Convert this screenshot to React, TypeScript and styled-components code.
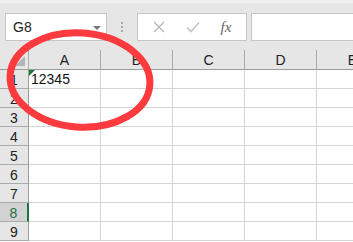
import styled, { createGlobalStyle } from "styled-components"

const GlobalStyle = createGlobalStyle`
  html, body {
    margin: 0;
    padding: 0;
    background: #ffffff;
    overflow: hidden;
  }
  * {
    box-sizing: border-box;
  }
`

const Sheet = styled.div`
  position: relative;
  width: 353px;
  height: 242px;
  overflow: hidden;
  font-family: "Liberation Sans", Arial, sans-serif;
`

const FormulaBar = styled.div`
  height: 50px;
  background: #e6e6e6;
  border-top: 3px solid #f0f0f0;
  display: flex;
  align-items: flex-start;
  padding: 10px 0 0 5px;
`

const NameBox = styled.div`
  width: 102px;
  height: 28px;
  background: #ffffff;
  border: 1px solid #c6c6c6;
  display: flex;
  align-items: center;
  justify-content: space-between;
  padding: 0 5px 0 7px;
  font-size: 14px;
  color: #222;
`

const DropArrow = styled.span`
  width: 0;
  height: 0;
  border-left: 4px solid transparent;
  border-right: 4px solid transparent;
  border-top: 4px solid #777;
  margin-top: 1px;
`

const Grip = styled.div`
  width: 30px;
  height: 28px;
  display: flex;
  flex-direction: column;
  align-items: center;
  justify-content: center;
  gap: 2px;
`

const GripDot = styled.span`
  width: 2px;
  height: 2px;
  background: #a8a8a8;
`

const ButtonBox = styled.div`
  width: 110px;
  height: 28px;
  background: #ffffff;
  border: 1px solid #c6c6c6;
  display: flex;
  align-items: center;
  justify-content: space-around;
  padding: 0 4px;
`

const FxLabel = styled.span`
  font-family: "Liberation Serif", "Times New Roman", serif;
  font-style: italic;
  font-size: 15px;
  color: #666;
`

const FormulaInput = styled.div`
  flex: 1;
  height: 28px;
  margin-left: 4px;
  background: #ffffff;
  border: 1px solid #c6c6c6;
  border-right: none;
`

const Grid = styled.div`
  display: grid;
  grid-template-columns: 29px repeat(5, 72px);
  grid-template-rows: 20px;
  grid-auto-rows: 19px;
`

const Corner = styled.div`
  background: #e6e6e6;
  border-right: 1px solid #ababab;
  border-bottom: 1px solid #9b9b9b;
  position: relative;
`

const CornerTriangle = styled.span`
  position: absolute;
  right: 3px;
  bottom: 3px;
  width: 0;
  height: 0;
  border-left: 10px solid transparent;
  border-bottom: 10px solid #b4b4b4;
`

const ColHeader = styled.div`
  background: #e6e6e6;
  border-right: 1px solid #ababab;
  border-bottom: 1px solid #9b9b9b;
  display: flex;
  align-items: flex-end;
  justify-content: center;
  font-size: 14px;
  line-height: 16px;
  color: #222;
  padding-bottom: 1px;
`

const RowHeader = styled.div<{ $active?: boolean }>`
  background: ${(p) => (p.$active ? "#d2d2d2" : "#e6e6e6")};
  border-bottom: 1px solid #ababab;
  border-right: ${(p) => (p.$active ? "2px solid #217346" : "1px solid #9b9b9b")};
  display: flex;
  align-items: center;
  justify-content: center;
  font-size: 14px;
  color: ${(p) => (p.$active ? "#217346" : "#222")};
  padding-top: 1px;
`

const Cell = styled.div`
  position: relative;
  background: #ffffff;
  border-right: 1px solid #d4d4d4;
  border-bottom: 1px solid #d4d4d4;
  font-size: 14px;
  color: #111;
  padding: 1px 0 0 2px;
  line-height: 17px;
  white-space: nowrap;
`

const ErrorMark = styled.span`
  position: absolute;
  left: 0;
  top: 0;
  width: 0;
  height: 0;
  border-top: 6px solid #1f7a3a;
  border-right: 6px solid transparent;
`

const Highlight = styled.svg`
  position: absolute;
  left: 0;
  top: 0;
  pointer-events: none;
`

const columns = ["A", "B", "C", "D", "E"]
const rows = [1, 2, 3, 4, 5, 6, 7, 8, 9]

export default function App() {
  return (
    <Sheet>
      <GlobalStyle />
      <FormulaBar>
        <NameBox>
          G8
          <DropArrow />
        </NameBox>
        <Grip>
          <GripDot />
          <GripDot />
          <GripDot />
        </Grip>
        <ButtonBox>
          <svg width="12" height="12" viewBox="0 0 12 12">
            <path d="M1 1 L11 11 M11 1 L1 11" stroke="#b8b8b8" strokeWidth="1.4" />
          </svg>
          <svg width="14" height="12" viewBox="0 0 14 12">
            <path d="M1 6.5 L5 10.5 L13 1.5" stroke="#c4c4c4" strokeWidth="1.6" fill="none" />
          </svg>
          <FxLabel>fx</FxLabel>
        </ButtonBox>
        <FormulaInput />
      </FormulaBar>
      <Grid>
        <Corner>
          <CornerTriangle />
        </Corner>
        {columns.map((c) => (
          <ColHeader key={c}>{c}</ColHeader>
        ))}
        {rows.map((r) => (
          <>
            <RowHeader key={"h" + r} $active={r === 8}>
              {r}
            </RowHeader>
            {columns.map((c) => (
              <Cell key={c + r}>
                {r === 1 && c === "A" && (
                  <>
                    <ErrorMark />
                    12345
                  </>
                )}
              </Cell>
            ))}
          </>
        ))}
      </Grid>
      <Highlight width="353" height="242" viewBox="0 0 353 242">
        <ellipse
          cx="80"
          cy="80"
          rx="70"
          ry="47"
          fill="none"
          stroke="#fd3a3d"
          strokeWidth="7"
          transform="rotate(4 80 80)"
        />
      </Highlight>
    </Sheet>
  )
}
